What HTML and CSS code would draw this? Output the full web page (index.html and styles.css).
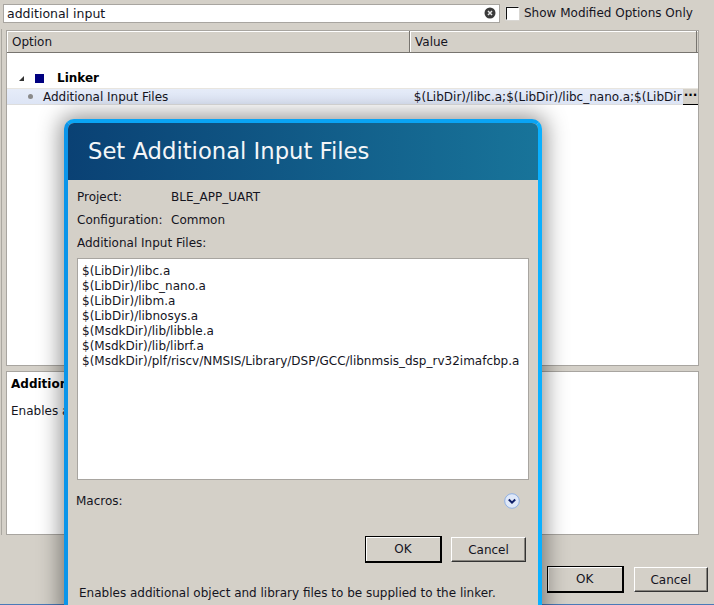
FILE: index.html
```html
<!DOCTYPE html>
<html lang="en">
<head>
<meta charset="utf-8">
<title>Set Additional Input Files</title>
<link rel="stylesheet" href="styles.css">
</head>
<body>
<div class="window">
  <div class="filter-bar">
    <div class="search">
      <span class="search-text">additional input</span>
      <svg class="clear" width="12" height="12" viewBox="0 0 12 12"><circle cx="6" cy="6" r="5.5" fill="#3a3a3a"/><path d="M4 4l4 4M8 4l-4 4" stroke="#e8e8e8" stroke-width="1.5"/></svg>
    </div>
    <span class="checkbox"></span>
    <span class="check-label">Show Modified Options Only</span>
  </div>
  <div class="table">
    <div class="thead">
      <div class="th th-option">Option</div>
      <div class="th th-value">Value</div>
    </div>
    <div class="group">
      <svg class="arrow" width="7" height="7" viewBox="0 0 7 7"><path d="M6 1v5H1z" fill="#333"/></svg>
      <span class="group-icon"></span>
      <span class="group-name">Linker</span>
    </div>
    <div class="row">
      <div class="cell-option"><span class="bullet"></span><span>Additional Input Files</span></div>
      <div class="cell-value"><span class="value-text">$(LibDir)/libc.a;$(LibDir)/libc_nano.a;$(LibDir</span></div>
      <div class="more">···</div>
    </div>
  </div>
  <div class="desc">
    <div class="desc-title">Additional Input Files</div>
    <div class="desc-text">Enables additional object and library files</div>
  </div>
  <div class="actions">
    <button class="btn btn-default">OK</button>
    <button class="btn btn-cancel">Cancel</button>
  </div>
</div>

<div class="dialog">
  <div class="dialog-head">Set Additional Input Files</div>
  <div class="dialog-body">
    <div class="info"><span class="info-key">Project:</span><span>BLE_APP_UART</span></div>
    <div class="info"><span class="info-key">Configuration:</span><span>Common</span></div>
    <div class="info">Additional Input Files:</div>
    <div class="files">
      <div>$(LibDir)/libc.a</div>
      <div>$(LibDir)/libc_nano.a</div>
      <div>$(LibDir)/libm.a</div>
      <div>$(LibDir)/libnosys.a</div>
      <div>$(MsdkDir)/lib/libble.a</div>
      <div>$(MsdkDir)/lib/librf.a</div>
      <div>$(MsdkDir)/plf/riscv/NMSIS/Library/DSP/GCC/libnmsis_dsp_rv32imafcbp.a</div>
    </div>
    <div class="macros">
      <span>Macros:</span>
      <svg width="16" height="16" viewBox="0 0 16 16"><circle cx="8" cy="8" r="7.3" fill="#dfe8f8" stroke="#8fb0e4"/><path d="M4.8 6.5L8 9.7l3.2-3.2" fill="none" stroke="#10206a" stroke-width="2"/></svg>
    </div>
    <div class="dialog-actions">
      <button class="btn btn-default">OK</button>
      <button class="btn btn-cancel">Cancel</button>
    </div>
    <div class="dialog-note">Enables additional object and library files to be supplied to the linker.</div>
  </div>
</div>
</body>
</html>
```
FILE: styles.css
```css
* { box-sizing: border-box; }
html, body { margin: 0; height: 100%; overflow: hidden; }
body {
  background: #d4d0c8;
  font-family: "DejaVu Sans", sans-serif;
  font-size: 12px;
  color: #14141e;
  position: relative;
  width: 714px;
  height: 605px;
}
.window {
  height: 605px;
  padding: 3px 6px 0 6px;
  display: flex;
  flex-direction: column;
  position: relative;
}
.window::after {
  content: "";
  position: absolute;
  left: 0;
  right: 0;
  bottom: 0;
  height: 1px;
  background: #4a7ab8;
}
.window::before {
  content: "";
  position: absolute;
  left: 1px;
  top: 29px;
  width: 1px;
  height: 506px;
  background: #aaa7a0;
}
.filter-bar {
  display: flex;
  align-items: center;
  height: 20px;
  margin-left: -3px;
}
.search {
  width: 497px;
  height: 19px;
  background: #fff;
  border: 1px solid #a8a5a0;
  display: flex;
  align-items: center;
  justify-content: space-between;
  padding: 0 2px 0 3px;
  font-size: 12.5px;
}
.clear { margin-right: 1px; }
.checkbox {
  width: 13px;
  height: 13px;
  margin-left: 6px;
  background: #fff;
  border: 1px solid #111;
  border-right-color: #fff;
  border-bottom-color: #fff;
  box-shadow: 0 0 0 0.5px #ddd;
}
.check-label { margin-left: 5px; }
.table {
  margin-top: 7px;
  width: 693px;
  height: 336px;
  background: #fff;
  border: 1px solid #a8a5a0;
}
.thead {
  display: flex;
  height: 22px;
  background: #d4d0c8;
  border-bottom: 1px solid #77746f;
  box-shadow: inset 0 1px 0 #fff;
}
.th {
  padding: 4px 0 0 4px;
  height: 21px;
}
.th-option {
  width: 403px;
  border-left: 1px solid #fff;
  border-right: 1px solid #77746f;
}
.th-value {
  width: 287px;
  border-left: 1px solid #fff;
  border-right: 1px solid #77746f;
}
.group {
  height: 35px;
  padding-top: 15px;
  display: flex;
  align-items: center;
  font-weight: bold;
  color: #000;
  padding-left: 11px;
}
.group-icon {
  width: 9px;
  height: 9px;
  margin-left: 10px;
  background: #000080;
}
.group-name { margin-left: 13px; }
.row {
  display: flex;
  height: 17px;
  background: linear-gradient(#e6ecf9, #dde5f5);
  border-top: 1px solid #e8e5df;
  border-bottom: 1px solid #ddd;
  align-items: center;
}
.cell-option {
  width: 403px;
  display: flex;
  align-items: center;
  padding-left: 21px;
}
.bullet {
  width: 5px;
  height: 5px;
  border-radius: 50%;
  background: #8a8a8a;
  margin-right: 10px;
}
.cell-value {
  width: 275px;
  padding-left: 5px;
  white-space: nowrap;
}
.value-text { display: block; }
.more {
  width: 15px;
  height: 16px;
  margin-top: 1px;
  background: #d4d0c8;
  border-bottom: 1px solid #000;
  font-weight: bold;
  line-height: 12px;
  text-align: center;
  color: #000;
}
.desc {
  margin-top: 5px;
  width: 693px;
  height: 164px;
  background: #fff;
  border: 1px solid #a8a5a0;
  padding: 5px 4px;
  overflow: hidden;
  white-space: nowrap;
}
.desc-title { font-weight: bold; color: #000; }
.desc-text { margin-top: 13px; }
.actions {
  display: flex;
  align-items: center;
  margin-top: 31px;
  margin-left: 541px;
  gap: 10px;
}
.btn {
  font: inherit;
  font-family: "DejaVu Sans", sans-serif;
  font-size: 12px;
  color: #14141e;
  background: #d4d0c8;
  padding: 0;
}
.btn-default {
  width: 77px;
  height: 27px;
  border: 1px solid #000;
  border-right-width: 2px;
  border-bottom-width: 2px;
  box-shadow: inset 1px 1px 0 #fff;
}
.btn-cancel {
  width: 75px;
  height: 25px;
  border: 1px solid #fff;
  border-right-color: #333;
  border-bottom-color: #333;
  box-shadow: inset -1px -1px 0 #88857f;
}
.dialog {
  position: absolute;
  left: 64px;
  top: 119px;
  width: 478px;
  height: 500px;
  border: 4px solid #0a95ea;
  border-top-color: #0aa4f4;
  border-right-color: #0ab0ff;
  border-radius: 10px 10px 0 0;
  background: #d4d0c8;
  box-shadow: 0 0 22px 4px rgba(0, 0, 0, 0.42);
  overflow: hidden;
}
.dialog-head {
  height: 57px;
  padding: 15px 0 0 20px;
  font-size: 22.7px;
  line-height: 27px;
  color: #f4f6f8;
  background: linear-gradient(90deg, #0a4174, #18749a);
}
.dialog-body {
  padding: 9px 9px 0 9px;
}
.info {
  height: 23px;
  line-height: 17px;
  display: flex;
}
.info-key { width: 94px; }
.files {
  width: 452px;
  height: 222px;
  background: #fff;
  border: 1px solid #a8a5a0;
  padding: 5px 4px;
  line-height: 15px;
}
.macros {
  display: flex;
  justify-content: space-between;
  align-items: center;
  width: 444px;
  margin-top: 12px;
  margin-left: -1px;
  height: 17px;
}
.dialog-actions {
  display: flex;
  justify-content: flex-end;
  align-items: center;
  gap: 9px;
  width: 449px;
  margin-top: 27px;
}
.dialog-note { margin-top: 23px; margin-left: 2px; }
```
